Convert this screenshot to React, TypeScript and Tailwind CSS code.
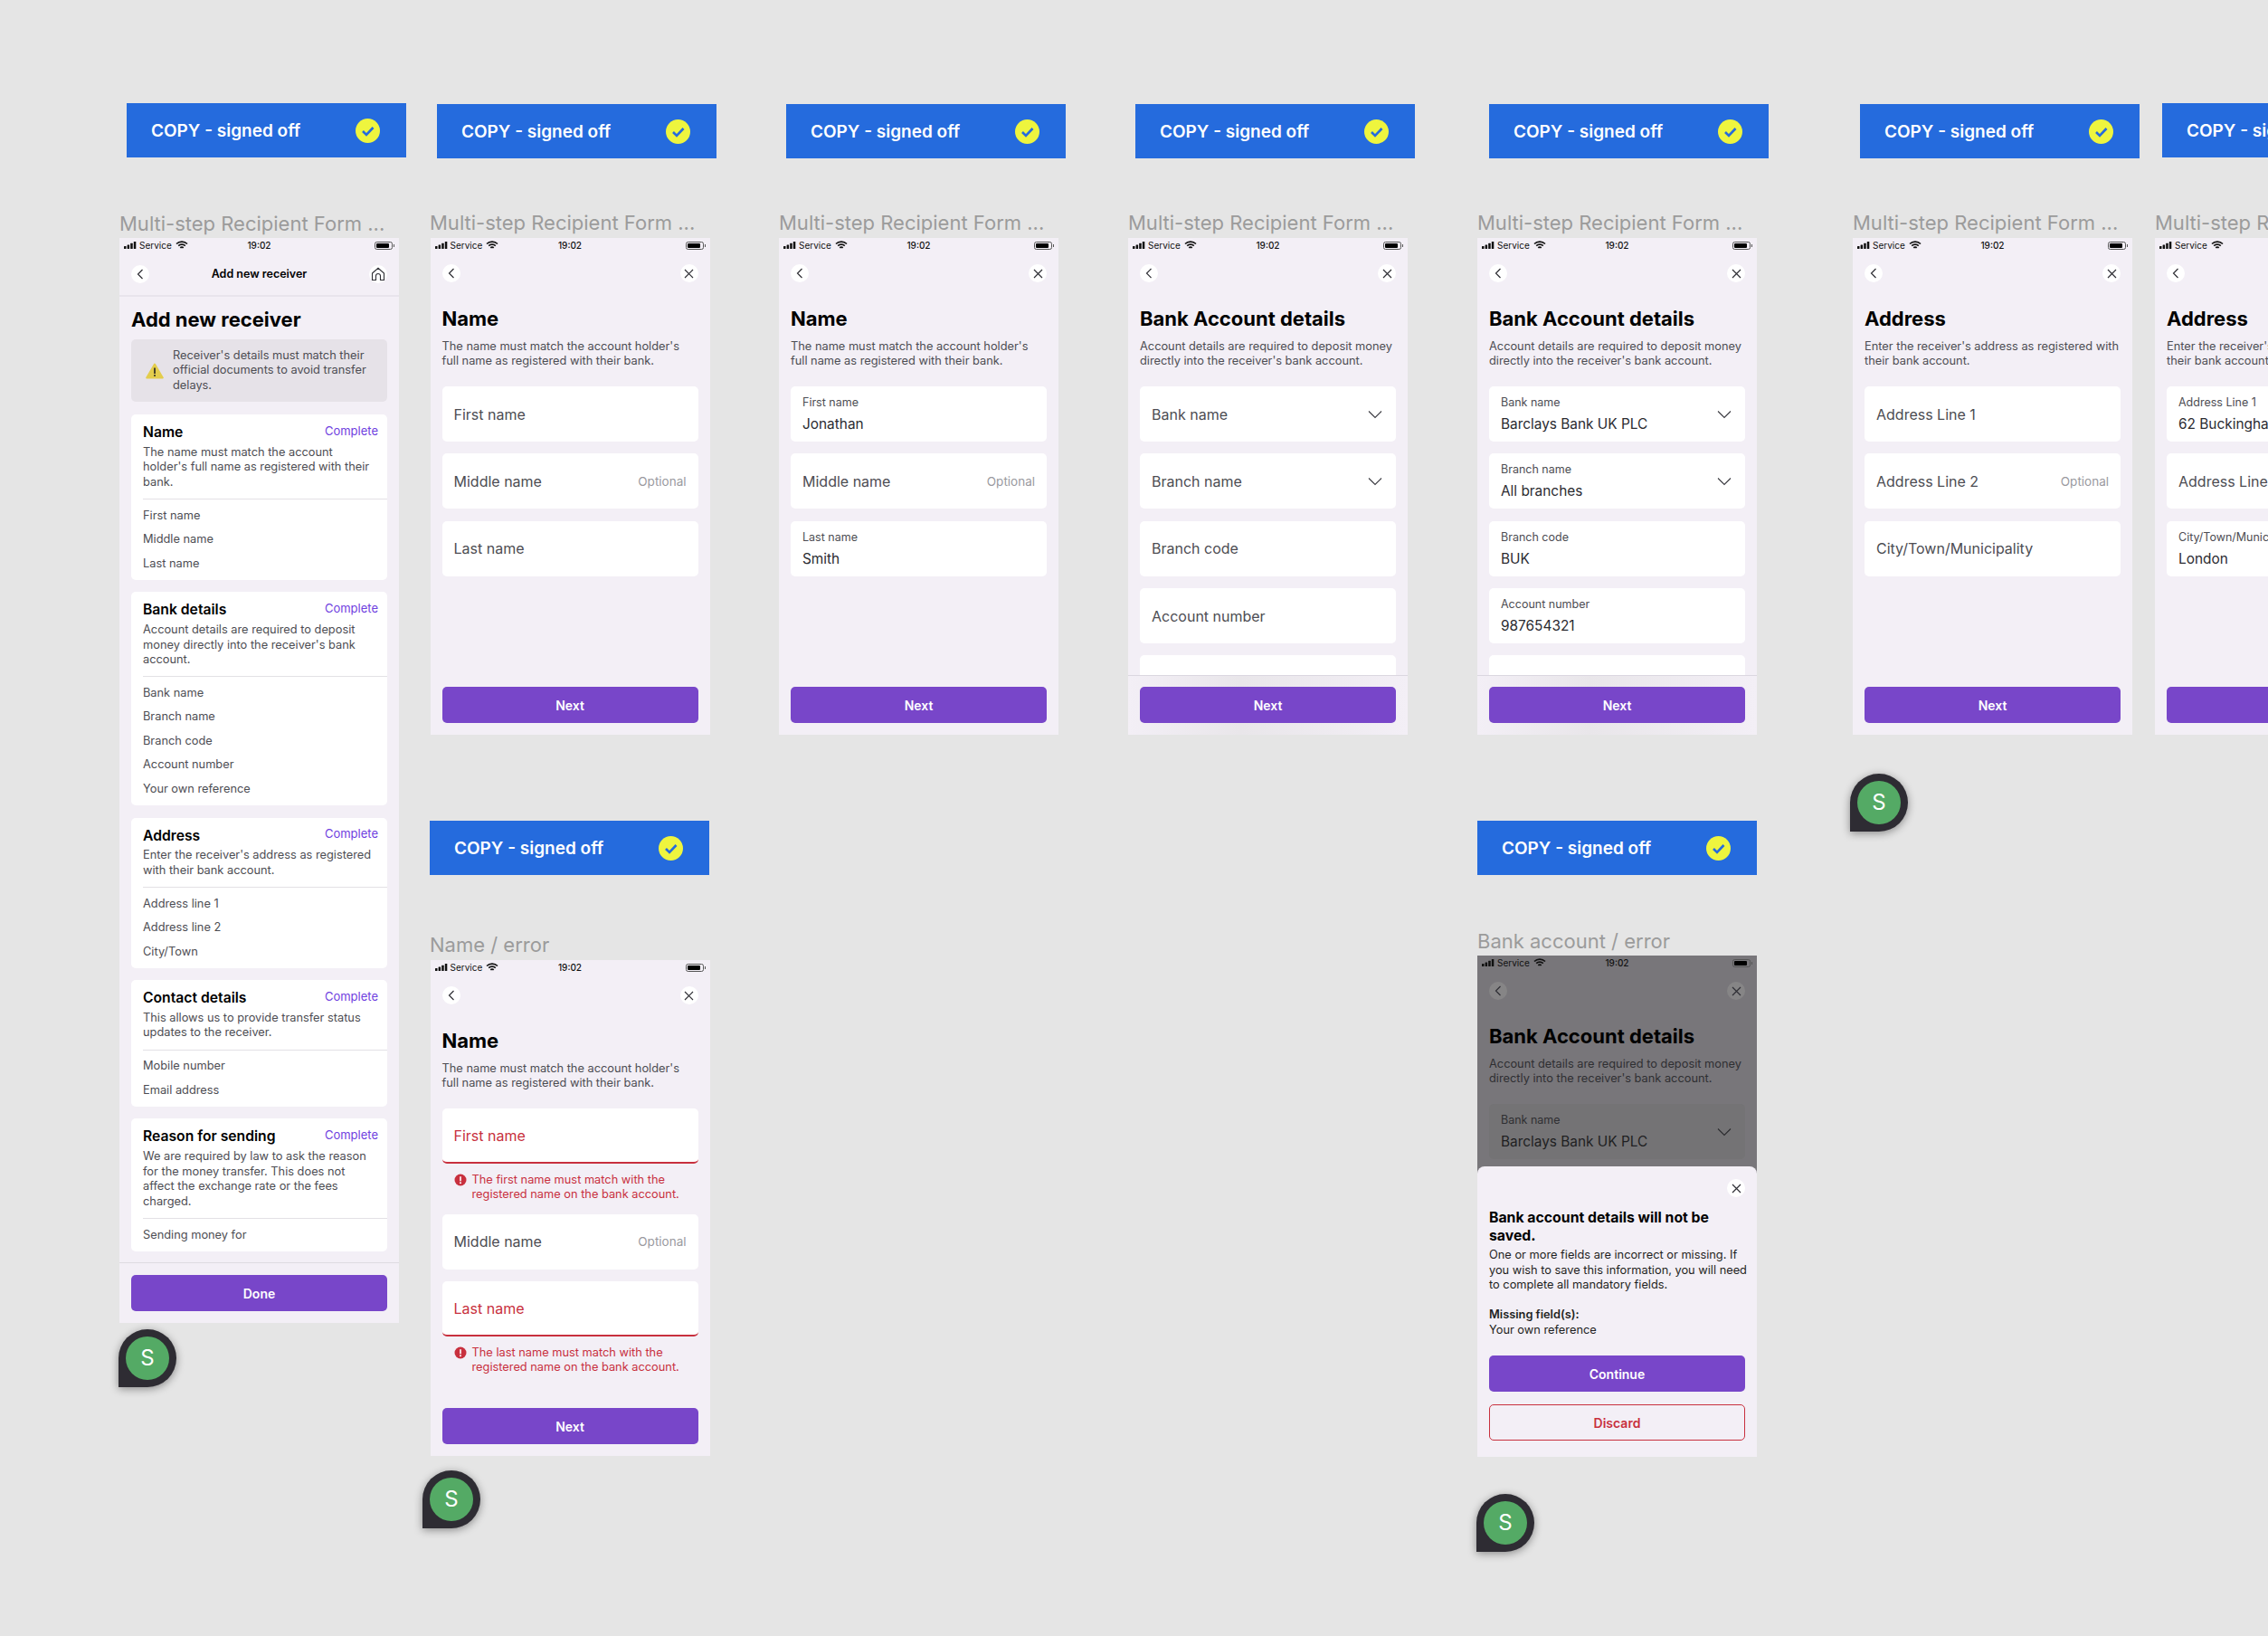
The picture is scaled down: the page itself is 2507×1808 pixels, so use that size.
import type { FunctionComponent, ReactNode } from "react";

const Chevron: FunctionComponent<{ dim?: boolean }> = ({ dim }) => (
  <svg width="16" height="10" viewBox="0 0 16 10" fill="none" stroke={dim ? "#2c2c2f" : "#3a3a40"} strokeWidth="1.1">
    <path d="M1 1.5 8 8.5 15 1.5" />
  </svg>
);

const Circle: FunctionComponent<{ children: ReactNode; dim?: boolean }> = ({ children, dim }) => (
  <div className={`flex h-5 w-5 items-center justify-center rounded-full ${dim ? "bg-[#868586]" : "bg-white"}`}>{children}</div>
);

const Back = () => (
  <svg width="8" height="12" viewBox="0 0 8 12" fill="none" stroke="#2f2f35" strokeWidth="1.2">
    <path d="M6.5 1 1.5 6 6.5 11" />
  </svg>
);

const Close = () => (
  <svg width="11" height="11" viewBox="0 0 11 11" fill="none" stroke="#2f2f35" strokeWidth="1.2">
    <path d="M1 1 10 10M10 1 1 10" />
  </svg>
);

const Home = () => (
  <svg width="16" height="16" viewBox="0 0 16 16" fill="none" stroke="#2f2f35" strokeWidth="1.1">
    <path d="M1.5 7 8 1.3 14.5 7V14.5H10.5V10A2.5 2.5 0 0 0 5.500 10V14.500H1.500Z" />
  </svg>
);

const StatusBar = () => (
  <div className="relative flex h-4 items-center pl-[5px] pr-[5px] text-[10px] leading-4 text-[#111]">
    <svg width="14" height="8" viewBox="0 0 14 8" fill="#111">
      <rect x="0" y="5" width="2.500" height="3" rx=".5" />
      <rect x="3.600" y="3.500" width="2.500" height="4.500" rx=".5" />
      <rect x="7.200" y="1.800" width="2.500" height="6.200" rx=".5" />
      <rect x="10.800" y="0" width="2.500" height="8" rx=".5" />
    </svg>
    <span className="ml-[3px]">Service</span>
    <svg className="ml-[4px]" width="14" height="10" viewBox="0 0 14 10" fill="none" stroke="#111" strokeWidth="1.700">
      <path d="M1 3.500A8.600 8.600 0 0 1 13 3.500M3.200 5.700A5.400 5.400 0 0 1 10.800 5.700M5.300 7.800A2.400 2.400 0 0 1 8.700 7.800" />
    </svg>
    <span className="absolute left-0 right-0 text-center font-medium">19:02</span>
    <div className="ml-auto flex items-center">
      <div className="flex h-[9px] w-[20px] items-center rounded-[2.500px] border border-[#555] p-[1px]">
        <div className="h-full w-[14px] rounded-[1px] bg-black" />
      </div>
      <div className="ml-[1px] h-[3px] w-[1px] bg-[#555]" />
    </div>
  </div>
);

const NextButton: FunctionComponent<{ label: string }> = ({ label }) => (
  <div className="flex h-10 items-center justify-center rounded-[5px] bg-[#7846c9] text-[14px] font-semibold text-white">{label}</div>
);

const Field: FunctionComponent<{ label?: string; value?: string; optional?: boolean; select?: boolean; error?: boolean; dim?: boolean }> = ({
  label,
  value,
  optional,
  select,
  error,
  dim,
}) => (
  <div
    className={`relative flex h-[61px] shrink-0 items-center justify-between rounded-[5px] px-[13px] ${
      dim ? "bg-[#747375]" : "bg-white"
    } ${error ? "border-b-2 border-[#c8303e]" : ""}`}
  >
    {value ? (
      <div className="flex flex-col pt-[1px]">
        <span className={`text-[12.500px] leading-[16px] ${dim ? "text-[#2f2f32]" : "text-[#4d4d53]"}`}>{label}</span>
        <span className={`mt-[6px] whitespace-nowrap text-[15.400px] leading-[20px] ${dim ? "text-[#1f1f22]" : "text-[#2b2b31]"}`}>{value}</span>
      </div>
    ) : (
      <span className={`whitespace-nowrap text-[16px] ${error ? "text-[#c8303e]" : "text-[#4d4d53]"}`}>{label}</span>
    )}
    {optional && <span className="text-[13.500px] text-[#9a9a9f]">Optional</span>}
    {select && (
      <div className="mr-[2px]">
        <Chevron dim={dim} />
      </div>
    )}
  </div>
);

const ErrorText: FunctionComponent<{ text: string }> = ({ text }) => (
  <div className="-mb-[0.600px] -mt-[3.600px] flex gap-[6px] pl-[13px] text-[12.800px] leading-[16.600px] text-[#c8303e]">
    <svg className="mt-[1.500px] shrink-0" width="14" height="14" viewBox="0 0 14 14">
      <circle cx="7" cy="7" r="6.500" fill="#c8303e" />
      <rect x="6.200" y="3" width="1.600" height="5.500" rx=".8" fill="#fff" />
      <circle cx="7" cy="10.300" r="1" fill="#fff" />
    </svg>
    <span className="w-[245px]">{text}</span>
  </div>
);

const Frame: FunctionComponent<{ pos: string; children: ReactNode }> = ({ pos, children }) => (
  <div className={`absolute flex w-[309px] flex-col overflow-hidden bg-[#f3eff6] ${pos}`}>{children}</div>
);

const FormFrame: FunctionComponent<{
  pos: string;
  title: string;
  desc: string;
  fields: ReactNode;
  scrolled?: boolean;
}> = ({ pos, title, desc, fields, scrolled }) => (
  <Frame pos={pos}>
    <StatusBar />
    <div className="mt-[13px] flex items-center justify-between px-[13px]">
      <Circle>
        <Back />
      </Circle>
      <Circle>
        <Close />
      </Circle>
    </div>
    <div className="flex min-h-0 flex-1 flex-col overflow-hidden px-[13px]">
      <h2 className="mt-[27px] text-[22px] font-bold leading-[26px] text-black">{title}</h2>
      <p className="mt-[9.500px] w-[283px] text-[12.800px] leading-[16.600px] text-[#4d4d53]">{desc}</p>
      <div className="mt-[19.500px] flex flex-col gap-[13.300px]">{fields}</div>
    </div>
    <div
      className={`px-[13px] pb-[13px] pt-[12.500px] ${
        scrolled ? "border-t border-[#dbd7e0] bg-linear-to-r from-[#f3eff6] via-[#e9e6ea] via-40% to-[#f3eff6]" : ""
      }`}
    >
      <NextButton label="Next" />
    </div>
  </Frame>
);

const Banner: FunctionComponent<{ pos: string }> = ({ pos }) => (
  <div className={`absolute flex h-[60px] w-[309px] items-center justify-between bg-[#256bdd] pl-[27px] pr-[29px] ${pos}`}>
    <span className="whitespace-nowrap pt-[2px] text-[19px] font-semibold text-white">COPY - signed off</span>
    <svg width="27" height="27" viewBox="0 0 27 27" fill="none">
      <circle cx="13.500" cy="13.500" r="13.500" fill="#eef53e" />
      <path d="M8 14 12 18 19.500 10" stroke="#256bdd" strokeWidth="2.600" />
    </svg>
  </div>
);

const Label: FunctionComponent<{ pos: string; text: string }> = ({ pos, text }) => (
  <div className={`absolute h-[30px] whitespace-nowrap text-[22px] leading-[30px] text-[#9b9b9b] ${pos}`}>{text}</div>
);

const Pin: FunctionComponent<{ pos: string }> = ({ pos }) => (
  <div className={`absolute flex h-16 w-16 items-center justify-center rounded-full rounded-bl-none bg-[#2e2c33] shadow-[0_2px_10px_rgba(0,0,0,0.4)] ${pos}`}>
    <div className="flex h-12 w-12 items-center justify-center rounded-full bg-[#54aa65] text-[24px] text-white">S</div>
  </div>
);

const SummaryCard: FunctionComponent<{ title: string; desc: string; items: string[] }> = ({ title, desc, items }) => (
  <div className="rounded-[5px] bg-white pb-[4.750px] pl-[13px] pt-[10px]">
    <div className="flex items-start justify-between pr-[10px]">
      <span className="text-[15.700px] font-semibold leading-[20px] text-black">{title}</span>
      <span className="-mt-[0.500px] text-[13px] leading-[17px] text-[#6f42e0]">Complete</span>
    </div>
    <p className="mt-[3.700px] w-[256px] text-[12.800px] leading-[16.600px] text-[#4d4d53]">{desc}</p>
    <div className="mt-[9.500px] border-t border-[#e3e1e5] pt-[4.750px]">
      {items.map((item) => (
        <div key={item} className="h-[26.500px] text-[12.800px] leading-[26.500px] text-[#4d4d53]">
          {item}
        </div>
      ))}
    </div>
  </div>
);

const nameDesc = "The name must match the account holder's full name as registered with their bank.";
const bankDesc = "Account details are required to deposit money directly into the receiver's bank account.";
const addressDesc = "Enter the receiver's address as registered with their bank account.";
const firstError = "The first name must match with the registered name on the bank account.";
const lastError = "The last name must match with the registered name on the bank account.";

const Overview = () => (
  <Frame pos="left-[132px] top-[263px] h-[1199px]">
    <StatusBar />
    <div className="relative mt-[14px] flex h-[20px] items-center justify-between px-[13px]">
      <Circle>
        <Back />
      </Circle>
      <span className="text-[12.500px] font-semibold text-black">Add new receiver</span>
      <Circle>
        <Home />
      </Circle>
    </div>
    <div className="mt-[13px] h-[2px] bg-[#e8e4ec]" />
    <div className="flex min-h-0 flex-1 flex-col px-[13px]">
      <h1 className="mt-[12px] text-[22px] font-bold leading-[26px] text-black">Add new receiver</h1>
      <div className="mt-[9px] flex h-[69px] items-center gap-[10px] rounded-[5px] bg-[#e6e2e8] pl-[16px] text-[12.800px] leading-[16.600px] text-[#4d4d53]">
        <svg className="shrink-0" width="20" height="18" viewBox="0 0 20 18">
          <path d="M10 1.500 18.800 16.500H1.200Z" fill="#e3cd4d" stroke="#e3cd4d" strokeWidth="2" strokeLinejoin="round" />
          <rect x="9.200" y="5.500" width="1.600" height="6.500" fill="#222" />
          <circle cx="10" cy="14" r="1" fill="#222" />
        </svg>
        <span className="w-[226px]">Receiver's details must match their official documents to avoid transfer delays.</span>
      </div>
      <div className="mt-[14px] flex flex-col gap-[13.300px]">
        <SummaryCard title="Name" desc="The name must match the account holder's full name as registered with their bank." items={["First name", "Middle name", "Last name"]} />
        <SummaryCard title="Bank details" desc="Account details are required to deposit money directly into the receiver's bank account." items={["Bank name", "Branch name", "Branch code", "Account number", "Your own reference"]} />
        <SummaryCard title="Address" desc="Enter the receiver's address as registered with their bank account." items={["Address line 1", "Address line 2", "City/Town"]} />
        <SummaryCard title="Contact details" desc="This allows us to provide transfer status updates to the receiver." items={["Mobile number", "Email address"]} />
        <SummaryCard title="Reason for sending" desc="We are required by law to ask the reason for the money transfer. This does not affect the exchange rate or the fees charged." items={["Sending money for"]} />
      </div>
    </div>
    <div className="border-t border-[#dedbe1] px-[13px] pb-[13px] pt-[13px]">
      <NextButton label="Done" />
    </div>
  </Frame>
);

const BankDiscard = () => (
  <Frame pos="left-[1633px] top-[1056px] h-[554px]">
    <div className="flex h-[241px] shrink-0 flex-col overflow-hidden bg-[#78767a]">
      <StatusBar />
      <div className="mt-[13px] flex items-center justify-between px-[13px]">
        <Circle dim>
          <Back />
        </Circle>
        <Circle dim>
          <Close />
        </Circle>
      </div>
      <div className="flex flex-col px-[13px]">
        <h2 className="mt-[27px] text-[22px] font-bold leading-[26px] text-black">Bank Account details</h2>
        <p className="mt-[9.500px] text-[12.800px] leading-[16.600px] text-[#2f2f32]">{bankDesc}</p>
        <div className="mt-[19.500px]">
          <Field dim select label="Bank name" value="Barclays Bank UK PLC" />
        </div>
      </div>
    </div>
    <div className="relative -mt-[8px] flex flex-1 flex-col rounded-t-[8px] bg-[#f3eff6] px-[13px]">
      <div className="mt-[14px] flex justify-end">
        <Circle>
          <Close />
        </Circle>
      </div>
      <h3 className="mt-[13px] text-[15.800px] font-bold leading-[20px] text-black">Bank account details will not be saved.</h3>
      <p className="mt-[3px] w-[288px] text-[12.800px] leading-[16.600px] text-[#1f1f22]">
        One or more fields are incorrect or missing. If you wish to save this information, you will need to complete all mandatory fields.
      </p>
      <p className="mt-[16.600px] text-[12.800px] font-semibold leading-[16.600px] text-[#1f1f22]">Missing field(s):</p>
      <p className="text-[12.800px] leading-[16.600px] text-[#1f1f22]">Your own reference</p>
      <div className="mt-[19.500px]">
        <NextButton label="Continue" />
      </div>
      <div className="mt-[14px] flex h-10 items-center justify-center rounded-[5px] border border-[#c8303e] text-[14px] font-semibold text-[#c8303e]">
        Discard
      </div>
    </div>
  </Frame>
);

const App: FunctionComponent = () => {
  return (
    <div className="relative h-[1808px] w-[2507px] overflow-hidden bg-[#e5e5e5] font-['Inter',sans-serif]">
      <Banner pos="left-[140px] top-[114px]" />
      <Banner pos="left-[483px] top-[115px]" />
      <Banner pos="left-[869px] top-[115px]" />
      <Banner pos="left-[1255px] top-[115px]" />
      <Banner pos="left-[1646px] top-[115px]" />
      <Banner pos="left-[2056px] top-[115px]" />
      <Banner pos="left-[2390px] top-[114px]" />
      <Banner pos="left-[475px] top-[907px]" />
      <Banner pos="left-[1633px] top-[907px]" />

      <Label pos="left-[132px] top-[232px]" text="Multi-step Recipient Form ..." />
      <Label pos="left-[475px] top-[231px]" text="Multi-step Recipient Form ..." />
      <Label pos="left-[861px] top-[231px]" text="Multi-step Recipient Form ..." />
      <Label pos="left-[1247px] top-[231px]" text="Multi-step Recipient Form ..." />
      <Label pos="left-[1633px] top-[231px]" text="Multi-step Recipient Form ..." />
      <Label pos="left-[2048px] top-[231px]" text="Multi-step Recipient Form ..." />
      <Label pos="left-[2382px] top-[231px]" text="Multi-step Recipient Form ..." />
      <Label pos="left-[475px] top-[1029px]" text="Name / error" />
      <Label pos="left-[1633px] top-[1025px]" text="Bank account / error" />

      <Overview />

      <FormFrame
        pos="left-[475.500px] top-[263px] h-[549px]"
        title="Name"
        desc={nameDesc}
        fields={
          <>
            <Field label="First name" />
            <Field label="Middle name" optional />
            <Field label="Last name" />
          </>
        }
      />
      <FormFrame
        pos="left-[861px] top-[263px] h-[549px]"
        title="Name"
        desc={nameDesc}
        fields={
          <>
            <Field label="First name" value="Jonathan" />
            <Field label="Middle name" optional />
            <Field label="Last name" value="Smith" />
          </>
        }
      />
      <FormFrame
        pos="left-[1247px] top-[263px] h-[549px]"
        scrolled
        title="Bank Account details"
        desc={bankDesc}
        fields={
          <>
            <Field label="Bank name" select />
            <Field label="Branch name" select />
            <Field label="Branch code" />
            <Field label="Account number" />
            <Field />
          </>
        }
      />
      <FormFrame
        pos="left-[1633px] top-[263px] h-[549px]"
        scrolled
        title="Bank Account details"
        desc={bankDesc}
        fields={
          <>
            <Field label="Bank name" value="Barclays Bank UK PLC" select />
            <Field label="Branch name" value="All branches" select />
            <Field label="Branch code" value="BUK" />
            <Field label="Account number" value="987654321" />
            <Field />
          </>
        }
      />
      <FormFrame
        pos="left-[2048px] top-[263px] h-[549px]"
        title="Address"
        desc={addressDesc}
        fields={
          <>
            <Field label="Address Line 1" />
            <Field label="Address Line 2" optional />
            <Field label="City/Town/Municipality" />
          </>
        }
      />
      <FormFrame
        pos="left-[2382px] top-[263px] h-[549px]"
        title="Address"
        desc={addressDesc}
        fields={
          <>
            <Field label="Address Line 1" value="62 Buckingham Gate" />
            <Field label="Address Line 2" optional />
            <Field label="City/Town/Municipality" value="London" />
          </>
        }
      />
      <FormFrame
        pos="left-[475.500px] top-[1061px] h-[548px]"
        title="Name"
        desc={nameDesc}
        fields={
          <>
            <Field label="First name" error />
            <ErrorText text={firstError} />
            <Field label="Middle name" optional />
            <Field label="Last name" error />
            <ErrorText text={lastError} />
          </>
        }
      />
      <BankDiscard />

      <Pin pos="left-[131px] top-[1469px]" />
      <Pin pos="left-[467px] top-[1625px]" />
      <Pin pos="left-[1632px] top-[1651px]" />
      <Pin pos="left-[2045px] top-[855px]" />
    </div>
  );
};

export default App;
